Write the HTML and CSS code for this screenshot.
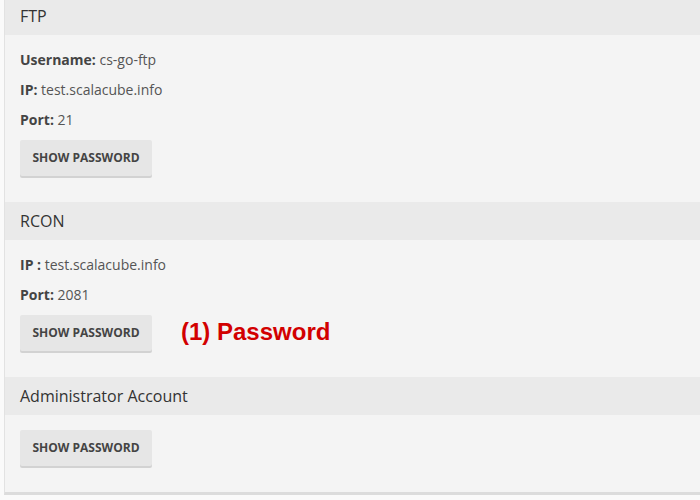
FILE: index.html
```html
<!DOCTYPE html>
<html lang="en">
<head>
  <meta charset="UTF-8" />
  <title>Server access</title>
  <link rel="stylesheet" href="styles.css">
</head>
<body>
  <div class="panel">
    <div class="panel-head">FTP</div>
    <div class="panel-body">
      <p><b>Username:</b> cs-go-ftp</p>
      <p><b>IP:</b> test.scalacube.info</p>
      <p><b>Port:</b> 21</p>
      <div class="actions">
        <button class="btn">Show password</button>
      </div>
    </div>

    <div class="panel-head">RCON</div>
    <div class="panel-body">
      <p><b>IP :</b> test.scalacube.info</p>
      <p><b>Port:</b> 2081</p>
      <div class="actions">
        <button class="btn">Show password</button>
        <span class="note">(1) Password</span>
      </div>
    </div>

    <div class="panel-head">Administrator Account</div>
    <div class="panel-body">
      <div class="actions">
        <button class="btn">Show password</button>
      </div>
    </div>
  </div>
</body>
</html>
```

FILE: styles.css
```css
* {
  box-sizing: border-box;
  margin: 0;
  padding: 0;
}

html, body {
  height: 100%;
  background: #fafafa;
  font-family: 'Open Sans', sans-serif;
  color: #555;
}

body {
  padding: 0 0 0 4px;
}

.panel {
  margin-top: -3px;
  background: #f4f4f4;
  border-left: 1px solid #e2e2e2;
  border-bottom: 3px solid #dcdcdc;
}

.panel-head {
  height: 38px;
  padding: 0 15px;
  display: flex;
  align-items: center;
  background: #eaeaea;
  font-size: 16px;
  color: #333;
}

.panel-body {
  padding: 15px 15px 26px;
}

.panel-body p {
  font-size: 14px;
  line-height: 20px;
  margin-bottom: 10px;
}

.panel-body b {
  font-weight: 700;
  color: #444;
}

.actions {
  display: flex;
  align-items: center;
  gap: 29px;
}

.btn {
  height: 36px;
  width: 132px;
  border: none;
  border-radius: 2px;
  background: #e6e6e6;
  box-shadow: 0 2px 0 #d2d2d2;
  font-family: 'Open Sans', sans-serif;
  font-size: 12px;
  font-weight: 700;
  text-transform: uppercase;
  color: #444;
  padding-bottom: 2px;
}

.note {
  font-family: 'Liberation Sans', Arial, sans-serif;
  font-size: 24px;
  font-weight: 700;
  color: #d20000;
  margin-bottom: 3px;
}
```
